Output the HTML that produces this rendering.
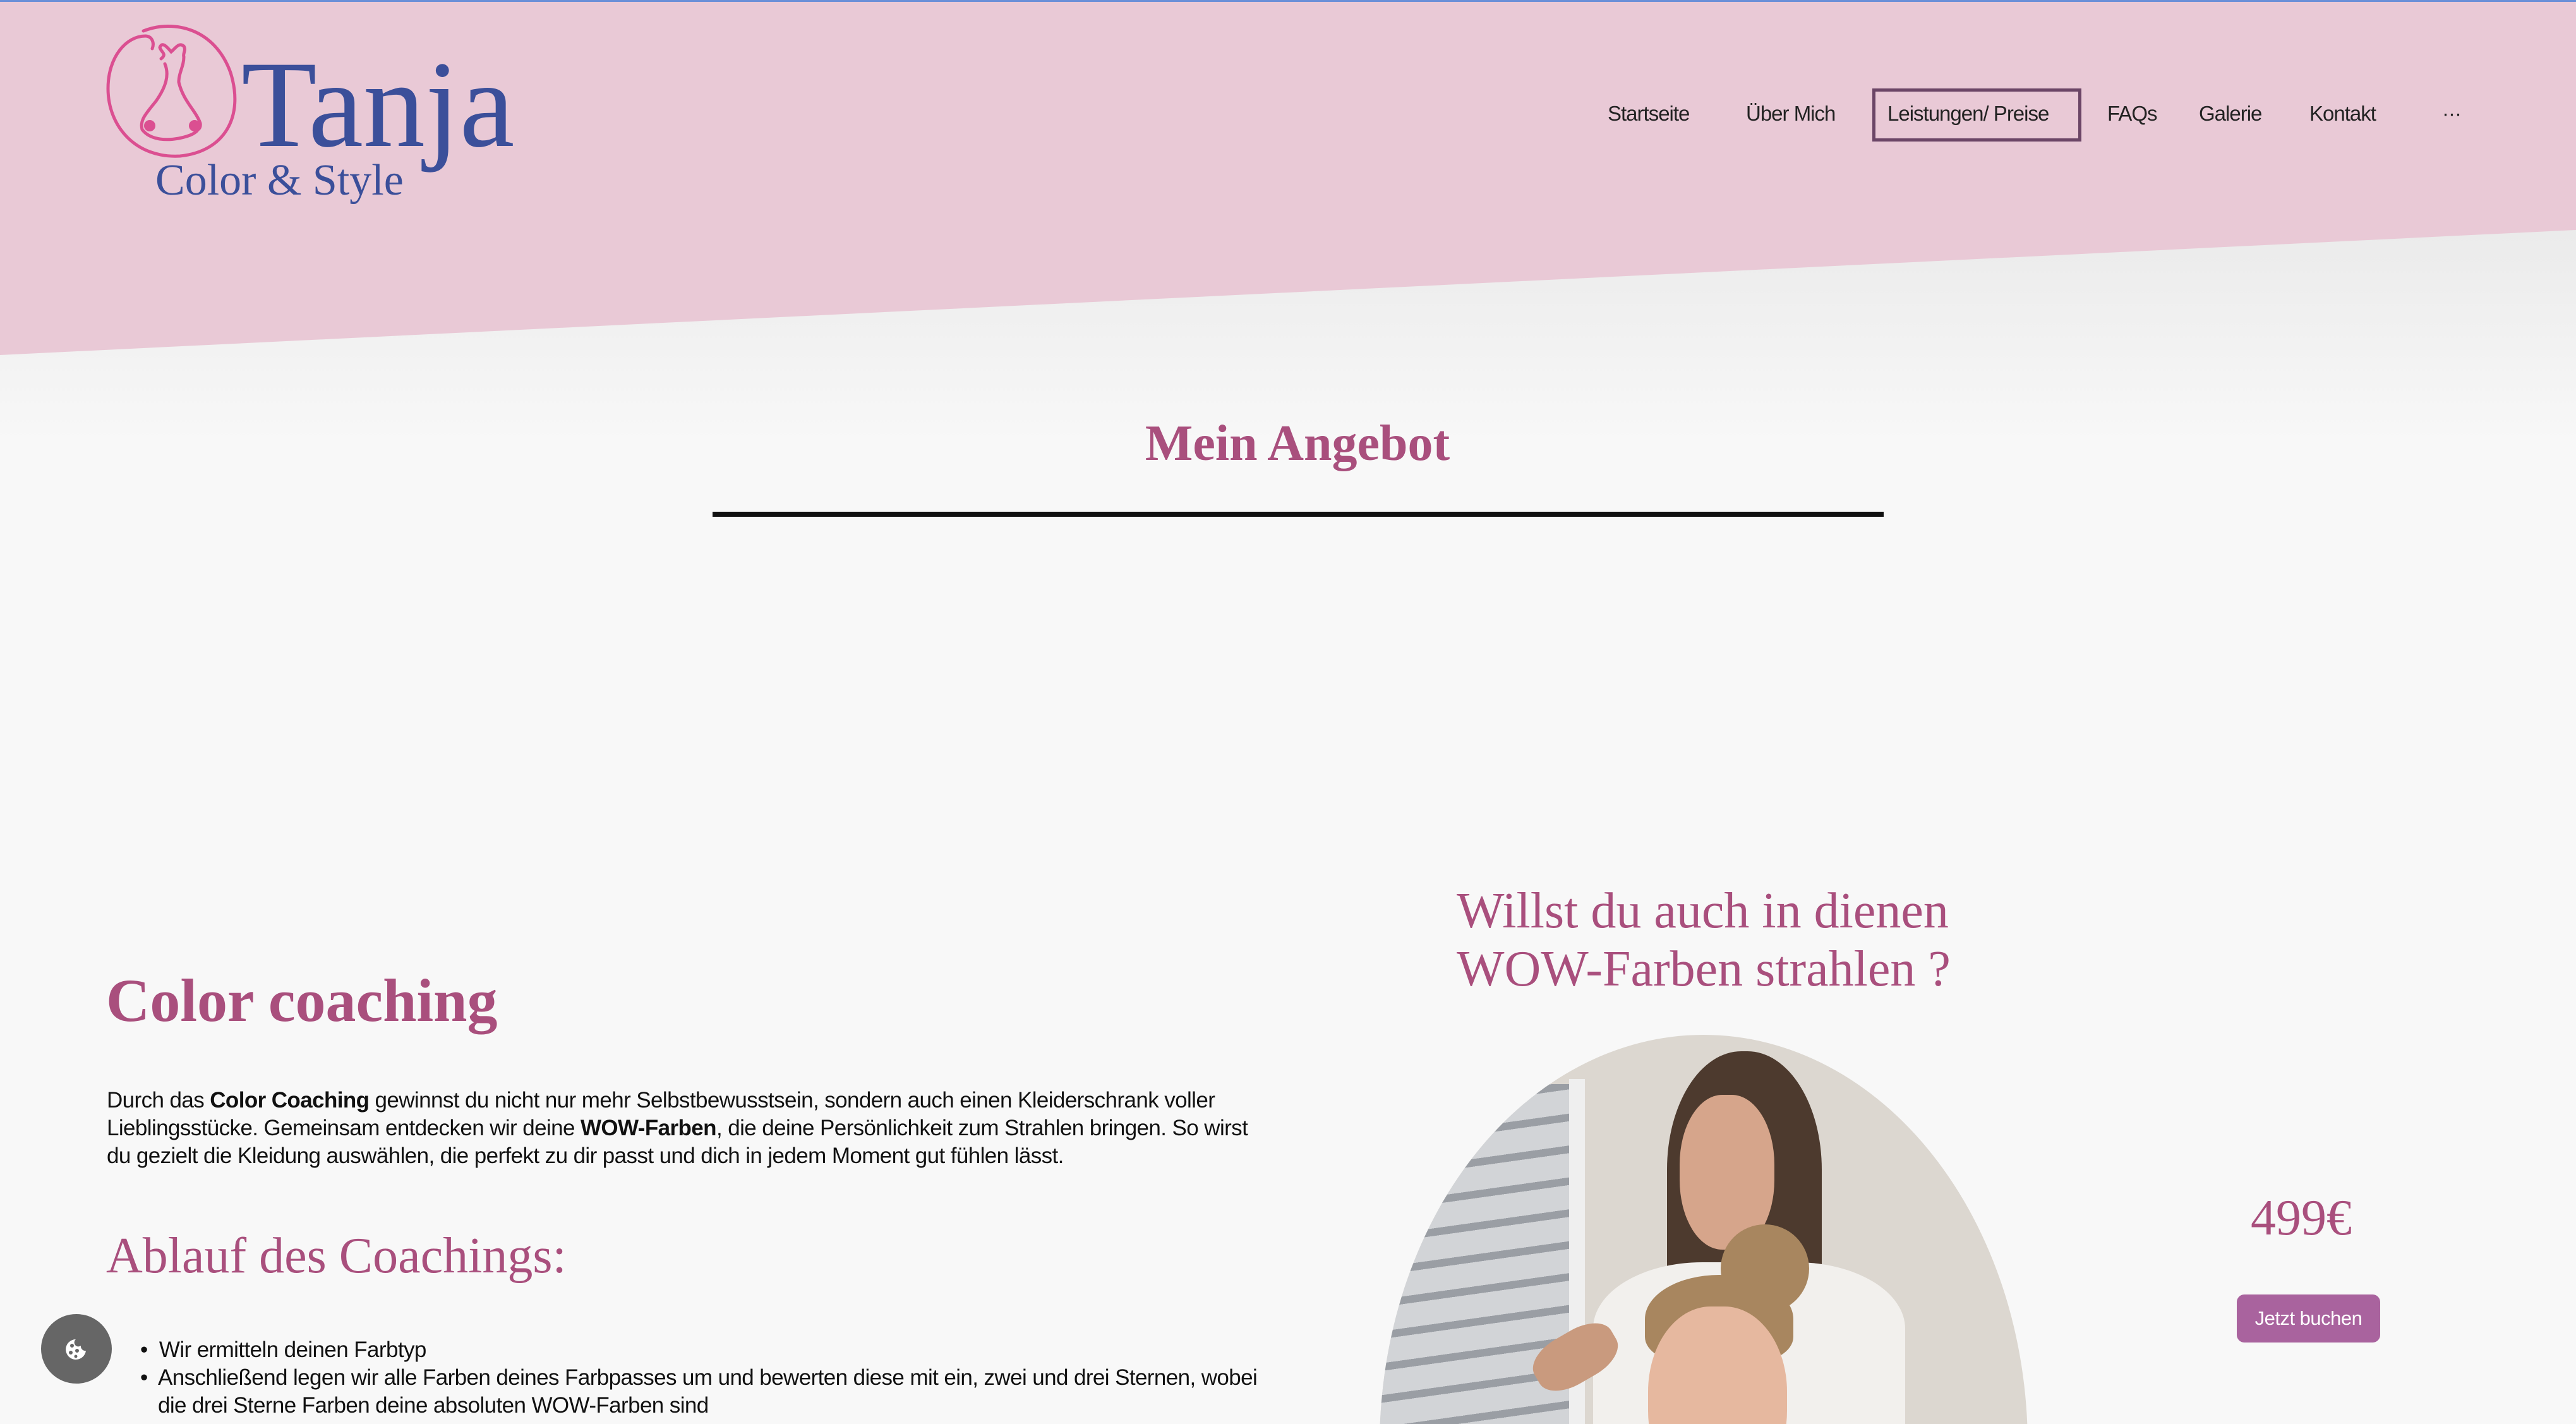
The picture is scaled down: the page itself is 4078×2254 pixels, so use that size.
<!DOCTYPE html>
<html style="width:4078px;height:2254px;overflow:hidden"><head><meta charset="utf-8"><style>
*{margin:0;padding:0;box-sizing:border-box}
body{width:4078px;height:2254px;overflow:hidden;background:#f8f8f8;position:relative;font-family:"Liberation Sans",sans-serif}
#wrap{position:absolute;left:0;top:0;width:4078px;height:2254px;overflow:hidden}
.abs{position:absolute}
.serif{font-family:"Liberation Serif",serif}
.pink{color:#a94f7d}
.nav{position:absolute;top:160px;font-size:33px;color:#222;letter-spacing:-1px;line-height:40px}
.body{font-size:35px;color:#111;line-height:44px;letter-spacing:-0.6px}
</style></head><body><div id="wrap">
<div class="abs" style="left:0;top:0;width:4078px;height:3px;background:#6a8fd8"></div>
<svg class="abs" style="left:0;top:3px" width="4078" height="700">
<defs><linearGradient id="sh" x1="0" y1="0" x2="0" y2="1"><stop offset="0" stop-color="#e6e6e6"/><stop offset="1" stop-color="#f8f8f8"/></linearGradient></defs>
<polygon points="0,440 4078,240 4078,700 0,700" fill="url(#sh)"/>
<polygon points="0,0 4078,0 4078,361 0,559" fill="#e9c9d6"/>
</svg>
<!-- logo -->
<svg class="abs" style="left:165px;top:35px" width="220" height="220" viewBox="0 0 220 220" fill="none" stroke="#db4f91" stroke-width="5" stroke-linecap="round">
<path d="M62 14 C110 -5 175 10 200 80 C222 150 190 205 120 212 C50 216 6 165 6 105 C6 55 35 22 65 22 C75 22 80 32 76 42"/>
<path d="M88 40 C92 30 100 40 106 47 C114 40 118 32 126 38 C130 45 124 50 126 55 C126 70 118 80 118 95 C125 125 145 140 152 160 C154 172 142 172 146 168 M88 40 C90 48 100 50 90 58 M96 66 C104 85 96 105 82 125 C66 145 56 155 60 170 C72 186 96 188 118 184 C138 180 146 175 150 168"/>
<circle cx="72" cy="164" r="9" fill="#db4f91" stroke="none"/><circle cx="143" cy="164" r="9" fill="#db4f91" stroke="none"/>
</svg>
<div class="abs serif" style="left:382px;top:66px;font-size:196px;line-height:200px;color:#3b4f9a">Tanja</div>
<div class="abs serif" style="left:246px;top:246px;font-size:70px;line-height:80px;color:#3b4f9a">Color &amp; Style</div>
<!-- nav -->
<div class="nav" style="left:2545px">Startseite</div>
<div class="nav" style="left:2764px">Über Mich</div>
<div class="abs" style="left:2964px;top:140px;width:331px;height:84px;border:5px solid #6b4566"></div>
<div class="nav" style="left:2988px">Leistungen/ Preise</div>
<div class="nav" style="left:3336px">FAQs</div>
<div class="nav" style="left:3481px">Galerie</div>
<div class="nav" style="left:3656px">Kontakt</div>
<div class="nav" style="left:3866px">···</div>
<!-- heading -->
<div class="abs serif pink" style="left:0;width:4108px;text-align:center;top:652px;font-size:80px;font-weight:bold;line-height:100px">Mein Angebot</div>
<div class="abs" style="left:1128px;top:810px;width:1854px;height:8px;background:#111"></div>
<div class="abs serif pink" style="left:2306px;top:1396px;font-size:80px;line-height:92px">Willst du auch in dienen<br>WOW-Farben strahlen ?</div>
<div class="abs serif pink" style="left:168px;top:1524px;font-size:96px;font-weight:bold;line-height:120px">Color coaching</div>
<div class="abs body" style="left:169px;top:1720px;width:2100px">Durch das <b>Color Coaching</b> gewinnst du nicht nur mehr Selbstbewusstsein, sondern auch einen Kleiderschrank voller<br>Lieblingsstücke. Gemeinsam entdecken wir deine <b>WOW-Farben</b>, die deine Persönlichkeit zum Strahlen bringen. So wirst<br>du gezielt die Kleidung auswählen, die perfekt zu dir passt und dich in jedem Moment gut fühlen lässt.</div>
<div class="abs serif pink" style="left:168px;top:1940px;font-size:80px;line-height:96px">Ablauf des Coachings:</div>
<div class="abs body" style="left:222px;top:2115px;width:2100px;height:139px;overflow:hidden">•&nbsp; Wir ermitteln deinen Farbtyp<br>•&nbsp; Anschließend legen wir alle Farben deines Farbpasses um und bewerten diese mit ein, zwei und drei Sternen, wobei<br><span style="padding-left:28px">die drei Sterne Farben deine absoluten WOW-Farben sind</span></div>
<!-- photo -->
<div class="abs" style="left:2184px;top:1638px;width:1026px;height:616px;overflow:hidden">
<div class="abs" style="left:0;top:0;width:1026px;height:1300px;border-radius:50%;overflow:hidden;background:#dcd7d0">
 <div class="abs" style="left:0;top:78px;width:300px;height:560px;background:repeating-linear-gradient(172deg,#d2d4d7 0 38px,#9a9ea4 38px 50px)"></div>
 <div class="abs" style="left:300px;top:70px;width:25px;height:560px;background:#efefef"></div>
 <div class="abs" style="left:455px;top:26px;width:245px;height:390px;border-radius:48% 48% 12% 12%;background:#4d3a2e"></div>
 <div class="abs" style="left:475px;top:95px;width:150px;height:245px;border-radius:45%;background:#d6a58b"></div>
 <div class="abs" style="left:338px;top:360px;width:494px;height:300px;border-radius:35% 35% 0 0;background:#f2f0ed"></div>
 <div class="abs" style="left:240px;top:470px;width:140px;height:80px;border-radius:40%;background:#c99a7e;transform:rotate(-30deg)"></div>
 <div class="abs" style="left:540px;top:300px;width:140px;height:140px;border-radius:50%;background:#a8865f"></div>
 <div class="abs" style="left:420px;top:380px;width:235px;height:140px;border-radius:50% 50% 30% 30%;background:#a8865f"></div>
 <div class="abs" style="left:425px;top:430px;width:220px;height:300px;border-radius:45%;background:#e6b89f"></div>
</div></div>
<div class="abs serif pink" style="left:3563px;top:1882px;font-size:80px;line-height:92px">499€</div>
<div class="abs" style="left:3541px;top:2049px;width:227px;height:76px;background:#a9639e;border-radius:12px;color:#fff;font-size:31px;text-align:center;line-height:76px;letter-spacing:-0.5px">Jetzt buchen</div>
<div class="abs" style="left:65px;top:2080px;width:112px;height:110px;border-radius:50%;background:#666"></div>
<svg class="abs" style="left:100px;top:2116px" width="40" height="40" viewBox="0 0 40 40"><path d="M20 4 A16 16 0 1 0 36 22 A7 7 0 0 1 28 14 A6 6 0 0 1 20 4Z" fill="#fff"/><circle cx="14" cy="14" r="3" fill="#666"/><circle cx="22" cy="22" r="3" fill="#666"/><circle cx="12" cy="25" r="3" fill="#666"/><circle cx="20" cy="31" r="2.5" fill="#666"/></svg>
</div></body></html>
